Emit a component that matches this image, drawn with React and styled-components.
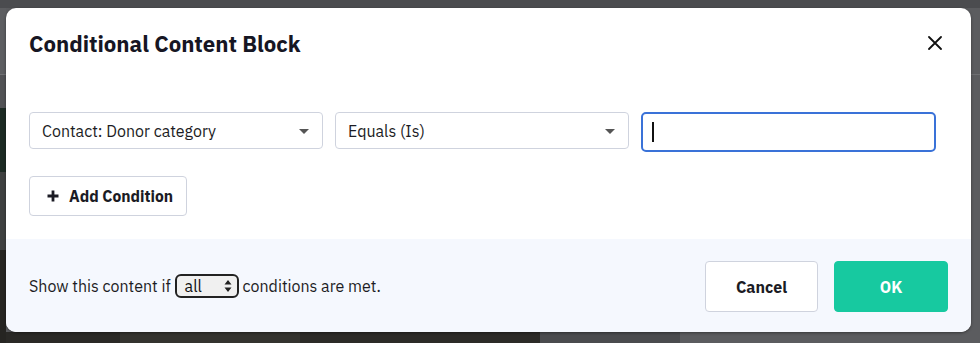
import React from "react";
import styled, { createGlobalStyle } from "styled-components";

const Global = createGlobalStyle`
  html, body { margin: 0; padding: 0; }
  body {
    width: 980px;
    height: 343px;
    overflow: hidden;
    font-family: "IBM Plex Sans", Inter, "Noto Sans", sans-serif;
    background: #58595c;
  }
`;

const Backdrop = styled.div`
  width: 980px;
  height: 343px;
  box-sizing: border-box;
  padding: 8px 9px 11px 6px;
  background-color: #58595c;
  background-image:
    linear-gradient(to bottom,
      #4b4c4f 0 8px, #5d5e61 8px 74px, #707174 74px 75px, #515255 75px 108px,
      #1c2a23 108px 172px, #3e4040 172px 250px, #262522 250px 343px),
    linear-gradient(to right,
      #2a2926 0 120px, #34332f 120px 300px, #2c2b28 300px 540px, #4a4b4e 540px 680px, #5b5c5f 680px 980px),
    linear-gradient(to bottom, #4b4c4f 0 8px, #5b5c5f 8px 74px, #6e6f72 74px 75px, #5b5c5f 75px 343px);
  background-size: 6px 343px, 980px 11px, 980px 343px;
  background-position: 0 0, 0 332px, 0 0;
  background-repeat: no-repeat;
`;

const Modal = styled.div`
  height: 100%;
  background: #fff;
  border-radius: 10px;
  overflow: hidden;
  display: flex;
  flex-direction: column;
  box-shadow: 0 1px 3px rgba(0,0,0,0.4);
`;

const Header = styled.div`
  display: flex;
  align-items: center;
  justify-content: space-between;
  padding: 21px 28px 0 23px;
  height: 28px;
`;

const Title = styled.h2`
  margin: 0;
  font-size: 22.2px;
  font-weight: 700;
  color: #161623;
`;

const CloseButton = styled.button`
  border: 0;
  background: transparent;
  padding: 0;
  width: 16px;
  height: 16px;
  display: flex;
  align-items: center;
  justify-content: center;
  cursor: pointer;
`;

const Body = styled.div`
  padding: 55px 35px 0 23px;
  flex: 1;
  display: flex;
  flex-direction: column;
  gap: 24px;
`;

const ConditionRow = styled.div`
  display: flex;
  align-items: flex-start;
  gap: 12px;
`;

const SelectBox = styled.div`
  width: 294px;
  height: 37px;
  box-sizing: border-box;
  border: 1px solid #cfd3de;
  border-radius: 4px;
  display: flex;
  align-items: center;
  justify-content: space-between;
  padding: 0 13px 0 12px;
  font-size: 16px;
  color: #1c1c24;
`;

const Caret = styled.span`
  width: 0;
  height: 0;
  border-left: 5px solid transparent;
  border-right: 5px solid transparent;
  border-top: 5px solid #555;
  margin-top: 2px;
`;

const ValueInput = styled.div`
  width: 295px;
  height: 40px;
  box-sizing: border-box;
  border: 2px solid #3a72d8;
  border-radius: 5px;
  display: flex;
  align-items: center;
  padding-left: 9px;
`;

const TextCursor = styled.span`
  width: 1.5px;
  height: 20px;
  background: #111;
`;

const AddButton = styled.button`
  align-self: flex-start;
  height: 40px;
  width: 158px;
  box-sizing: border-box;
  border: 1px solid #cfd3de;
  border-radius: 4px;
  background: #fff;
  display: flex;
  align-items: center;
  gap: 10px;
  padding: 0 0 0 17px;
  font-family: inherit;
  font-size: 15.6px;
  font-weight: 700;
  color: #1b1b24;
`;

const Footer = styled.div`
  height: 93px;
  background: #f5f8fe;
  display: flex;
  align-items: center;
  justify-content: space-between;
  padding: 0 23px 0 23px;
`;

const FooterText = styled.div`
  display: flex;
  align-items: center;
  gap: 4px;
  font-size: 16px;
  color: #1c1c24;
  margin-top: 1px;
`;

const MatchSelect = styled.div`
  width: 64px;
  height: 24px;
  box-sizing: border-box;
  border: 2px solid #222;
  border-radius: 6px;
  background: #f0f0f0;
  display: flex;
  align-items: center;
  justify-content: space-between;
  padding: 0 5px 0 8px;
  font-size: 16px;
  color: #111;
`;

const Actions = styled.div`
  display: flex;
  gap: 16px;
  margin-top: 2px;
`;

const ActionButton = styled.button`
  height: 51px;
  width: ${(p) => p.$w}px;
  box-sizing: border-box;
  border-radius: 4px;
  font-family: inherit;
  font-size: 16px;
  font-weight: 700;
  border: 1px solid ${(p) => (p.$primary ? "#17c9a0" : "#cfd3de")};
  background: ${(p) => (p.$primary ? "#17c9a0" : "#fff")};
  color: ${(p) => (p.$primary ? "#fff" : "#1b1b24")};
`;

export default function App() {
  return (
    <>
      <Global />
      <Backdrop>
        <Modal>
          <Header>
            <Title>Conditional Content Block</Title>
            <CloseButton aria-label="Close">
              <svg width="14" height="14" viewBox="0 0 14 14">
                <path d="M1 1L13 13M13 1L1 13" stroke="#111" strokeWidth="1.8" strokeLinecap="round" />
              </svg>
            </CloseButton>
          </Header>
          <Body>
            <ConditionRow>
              <SelectBox>
                Contact: Donor category
                <Caret />
              </SelectBox>
              <SelectBox>
                Equals (Is)
                <Caret />
              </SelectBox>
              <ValueInput>
                <TextCursor />
              </ValueInput>
            </ConditionRow>
            <AddButton>
              <svg width="12" height="12" viewBox="0 0 12 12">
                <path d="M6 0.5V11.5M0.5 6H11.5" stroke="#1b1b24" strokeWidth="2.8" />
              </svg>
              Add Condition
            </AddButton>
          </Body>
          <Footer>
            <FooterText>
              Show this content if
              <MatchSelect>
                all
                <svg width="8" height="14" viewBox="0 0 8 14">
                  <path d="M4 1L7.5 5.5H0.5Z M4 13L7.5 8.5H0.5Z" fill="#222" />
                </svg>
              </MatchSelect>
              conditions are met.
            </FooterText>
            <Actions>
              <ActionButton $w={113}>Cancel</ActionButton>
              <ActionButton $w={114} $primary>OK</ActionButton>
            </Actions>
          </Footer>
        </Modal>
      </Backdrop>
    </>
  );
}
